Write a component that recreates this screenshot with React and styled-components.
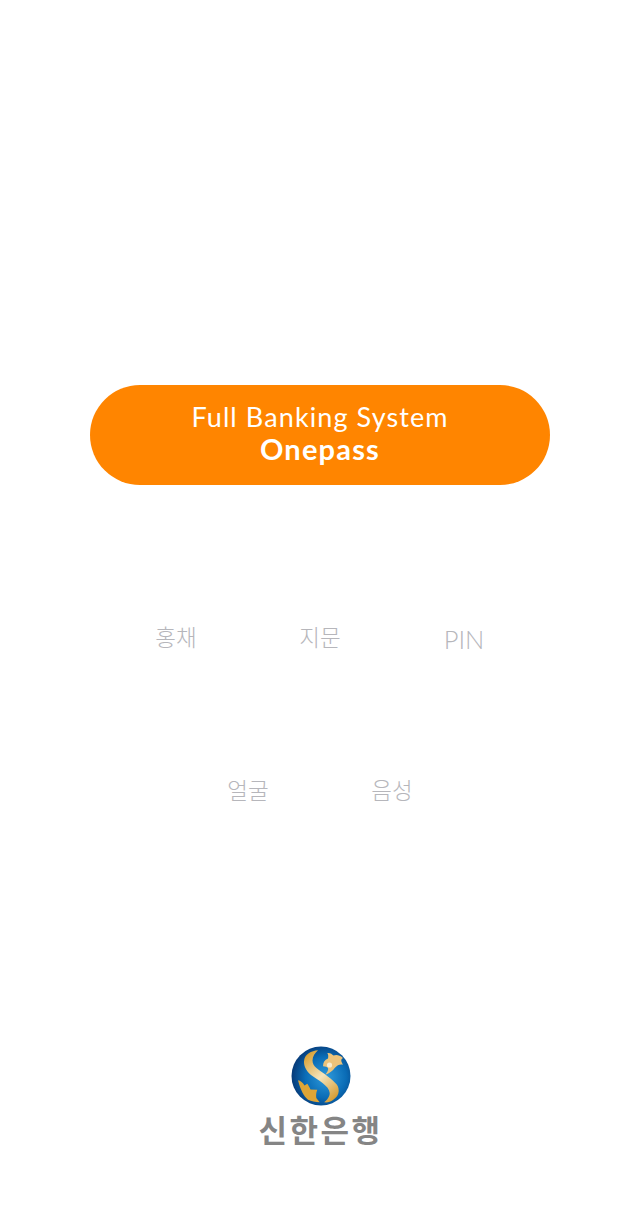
import React from "react";
import { styled, createGlobalStyle } from "styled-components";

const GlobalStyle = createGlobalStyle`
  html, body {
    margin: 0;
    padding: 0;
    background: #ffffff;
  }
`;

const methods = [
  [{ label: "홍채" }, { label: "지문" }, { label: "PIN", latin: true }],
  [{ label: "얼굴" }, { label: "음성" }],
];

const ShinhanMark = () => (
  <svg width="60" height="60" viewBox="0 0 60 60">
    <defs>
      <radialGradient id="globe" cx="58%" cy="52%" r="58%">
        <stop offset="0%" stopColor="#2f9bdc" />
        <stop offset="60%" stopColor="#0a6cb6" />
        <stop offset="100%" stopColor="#063a78" />
      </radialGradient>
      <linearGradient id="gold" x1="0.2" y1="0" x2="0.8" y2="1">
        <stop offset="0%" stopColor="#d9a033" />
        <stop offset="50%" stopColor="#f5e4bb" />
        <stop offset="100%" stopColor="#d59a2e" />
      </linearGradient>
    </defs>
    <circle cx="30" cy="30" r="29.5" fill="url(#globe)" />
    <path
      d="M27 4.300C20.500 4.800 13.500 8 13 15.300C12.700 20 15.500 25.500 20 29C26 33.500 38.700 40 38.700 47C38.700 51 36 54 33 56.300C36.500 56.800 39.500 56 42 54C45.500 51.500 47.700 48.500 47.700 45C47.700 41 46.500 39 44.300 37C41 33.500 37.500 31 33.700 28C28 23.500 21.500 21 21.500 14.500C21.500 10.500 24 7 27 4.300Z"
      fill="url(#gold)"
    />
    <path
      d="M36.300 7C39 6.500 41 8 42.500 9.500C45 8.500 48.500 8.700 52 12C50 13 49.500 14.500 52 18.700C49 18 46.500 19 43.700 22C42 24.500 38.500 27.500 34.300 28.700C36.500 26 37.500 24 37 22C36 20.500 34.500 21 32 20.300C32 16.500 33.500 14 37 12.500C37.500 10.500 37.300 8.500 36.300 7Z"
      fill="#ecc37a"
    />
    <circle cx="38.500" cy="19" r="2.600" fill="#f8ecd0" />
    <path
      d="M7 34.300C9.500 34.800 12 36.500 13.500 39.500L16.300 37.700C17.500 39.500 18.500 41 19.500 43.500L26.300 43.700C25 46.500 25 49.500 25.300 52L28.700 56.300C24.500 56 20.500 55 17 53.700C13 50.500 9.500 44 7 34.300Z"
      fill="#dfa536"
    />
  </svg>
);

export default function App() {
  return (
    <Page>
      <GlobalStyle />
      <LoginButton>
        <span>Full Banking System</span>
        <strong>Onepass</strong>
      </LoginButton>
      <Methods>
        {methods.map((row) => (
          <MethodRow key={row[0].label}>
            {row.map((item) => (
              <Method key={item.label} $latin={item.latin}>
                {item.label}
              </Method>
            ))}
          </MethodRow>
        ))}
      </Methods>
      <Logo>
        <ShinhanMark />
        <BankName>신한은행</BankName>
      </Logo>
    </Page>
  );
}

const Page = styled.div`
  width: 640px;
  height: 1220px;
  display: flex;
  flex-direction: column;
  align-items: center;
  padding-top: 385px;
  box-sizing: border-box;
  background: #ffffff;
  font-family: "Lato", "Noto Sans CJK KR", sans-serif;
`;

const LoginButton = styled.div`
  width: 460px;
  height: 100px;
  padding-bottom: 4px;
  box-sizing: border-box;
  border-radius: 50px;
  background-color: #ff8500;
  color: #ffffff;
  display: flex;
  flex-direction: column;
  align-items: center;
  justify-content: center;
  font-size: 27px;
  line-height: 32px;

  span {
    font-weight: 400;
    letter-spacing: 1.1px;
  }

  strong {
    font-weight: 700;
    font-size: 29px;
    letter-spacing: 1.2px;
  }
`;

const Methods = styled.div`
  display: flex;
  flex-direction: column;
  gap: 122px;
  margin-top: 138px;
`;

const MethodRow = styled.div`
  display: flex;
  justify-content: center;
`;

const Method = styled.div`
  width: 144px;
  height: 30px;
  line-height: 30px;
  text-align: center;
  color: #b6b6bb;
  font-size: ${(props) => (props.$latin ? "25.500px" : "22.500px")};
  font-weight: 300;
  padding-top: ${(props) => (props.$latin ? "1px" : "0")};
`;

const Logo = styled.div`
  display: flex;
  flex-direction: column;
  align-items: center;
  gap: 3px;
  margin-top: 240px;
  padding-left: 2px;
`;

const BankName = styled.div`
  font-family: "Noto Sans CJK KR", sans-serif;
  font-weight: 700;
  font-size: 31px;
  line-height: 40px;
  color: #858585;
  letter-spacing: 2.500px;
  margin-right: 1px;
`;
